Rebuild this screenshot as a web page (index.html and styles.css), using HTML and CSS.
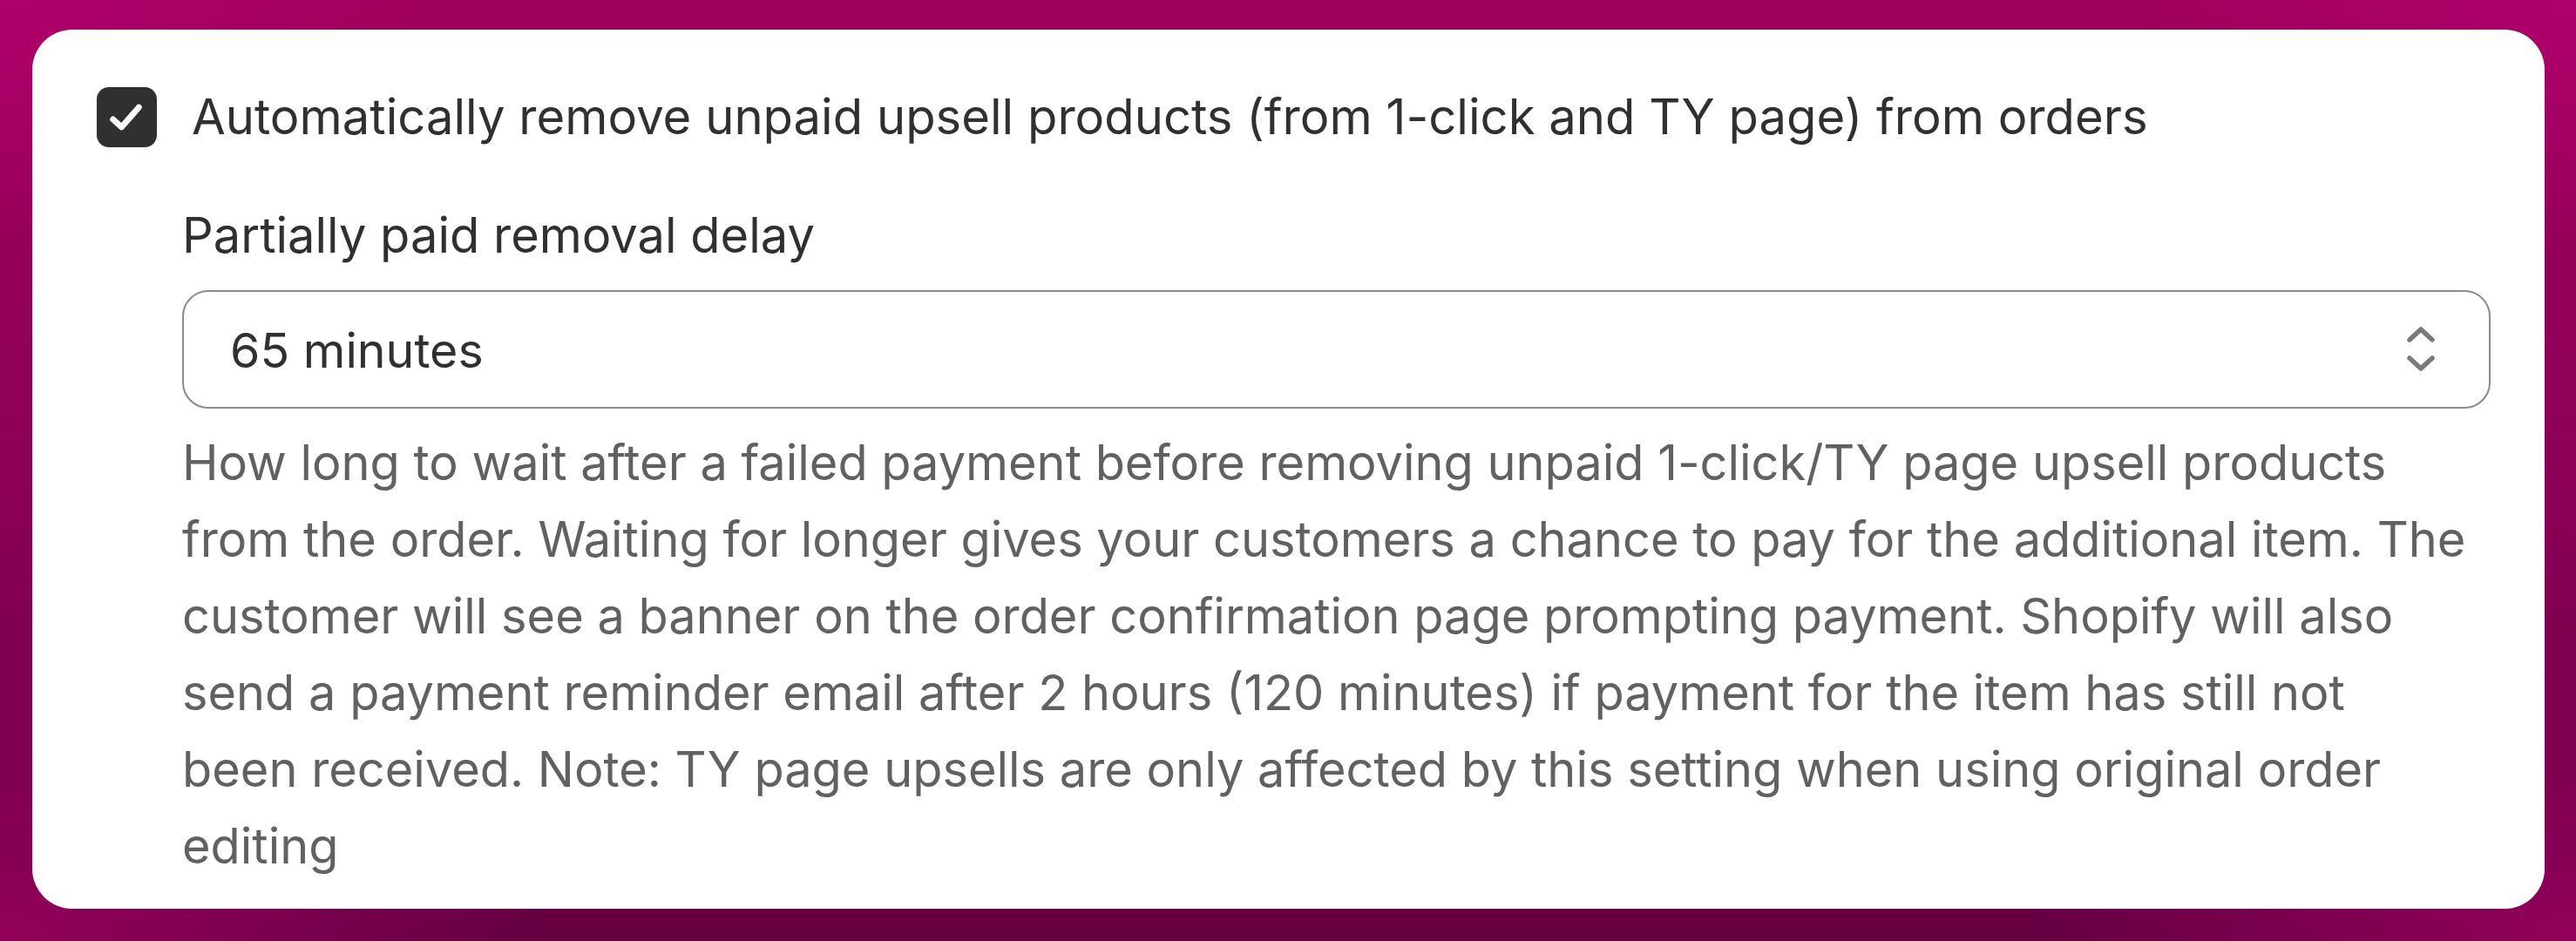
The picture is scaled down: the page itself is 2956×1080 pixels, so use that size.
FILE: index.html
```html
<!DOCTYPE html>
<html lang="en">
<head>
<meta charset="utf-8">
<title>Upsell settings</title>
<link rel="stylesheet" href="styles.css">
</head>
<body>
<div class="backdrop">
  <section class="card">
    <label class="check-row">
      <span class="checkbox">
        <svg viewBox="0 0 70 70" width="70" height="70" aria-hidden="true">
          <path d="M19 37 L29 46 L49 23" fill="none" stroke="#ffffff" stroke-width="7" stroke-linecap="round" stroke-linejoin="round"/>
        </svg>
      </span>
      <span class="check-text">Automatically remove unpaid upsell products (from 1-click and TY page) from orders</span>
    </label>
    <div class="field">
      <div class="field-label">Partially paid removal delay</div>
      <div class="select">
        <span class="select-value">65 minutes</span>
        <svg class="chevrons" viewBox="0 0 34 52" width="34" height="52" aria-hidden="true">
          <path d="M4 15 L17 3 L30 15" fill="none" stroke="#7a7a7a" stroke-width="5.5" stroke-linecap="round" stroke-linejoin="round"/>
          <path d="M4 36 L17 48 L30 36" fill="none" stroke="#7a7a7a" stroke-width="5.5" stroke-linecap="round" stroke-linejoin="round"/>
        </svg>
      </div>
      <p class="help">How long to wait after a failed payment before removing unpaid 1-click/TY page upsell products<br>from the order. Waiting for longer gives your customers a chance to pay for the additional item. The<br>customer will see a banner on the order confirmation page prompting payment. Shopify will also<br>send a payment reminder email after 2 hours (120 minutes) if payment for the item has still not<br>been received. Note: TY page upsells are only affected by this setting when using original order<br>editing</p>
    </div>
  </section>
</div>
</body>
</html>
```
FILE: styles.css
```css
html, body {
  margin: 0;
  padding: 0;
}
body {
  width: 2956px;
  height: 1080px;
  overflow: hidden;
  font-family: Inter, "Noto Sans", sans-serif;
}
.backdrop {
  box-sizing: border-box;
  width: 2956px;
  height: 1080px;
  padding: 34px 36px 37px 37px;
  background:
    radial-gradient(ellipse 700px 400px at 0% 0%, rgba(182, 0, 112, 0.7), rgba(182, 0, 112, 0) 70%),
    radial-gradient(ellipse 700px 400px at 100% 0%, rgba(182, 0, 112, 0.7), rgba(182, 0, 112, 0) 70%),
    radial-gradient(ellipse 900px 500px at 0% 100%, rgba(148, 0, 92, 0.95), rgba(148, 0, 92, 0) 70%),
    radial-gradient(ellipse 900px 500px at 100% 100%, rgba(148, 0, 92, 0.95), rgba(148, 0, 92, 0) 70%),
    linear-gradient(180deg, #a0005e 0%, #8a0056 55%, #640040 100%);
}
.card {
  box-sizing: border-box;
  height: 100%;
  background: #ffffff;
  border-radius: 46px;
  padding: 65px 62px 0 74px;
}
.check-row {
  display: flex;
  align-items: center;
  gap: 40px;
  height: 70px;
}
.checkbox {
  flex: none;
  width: 69px;
  height: 69px;
  border-radius: 14px;
  background: #303030;
  display: flex;
}
.check-text {
  font-size: 56.2px;
  line-height: 70px;
  color: #303030;
  white-space: nowrap;
}
.field {
  margin-left: 98px;
  margin-top: 66px;
}
.field-label {
  font-size: 56px;
  line-height: 70px;
  color: #303030;
}
.select {
  box-sizing: border-box;
  margin-top: 28px;
  height: 136px;
  border: 2px solid #8a8a8a;
  border-radius: 30px;
  display: flex;
  align-items: center;
  justify-content: space-between;
  padding: 0 61px 0 53px;
}
.select-value {
  font-size: 55.5px;
  color: #303030;
}
.chevrons {
  flex: none;
}
.help {
  margin: 18px 0 0 0;
  font-size: 55.9px;
  line-height: 88px;
  color: #616161;
  white-space: nowrap;
}
```
